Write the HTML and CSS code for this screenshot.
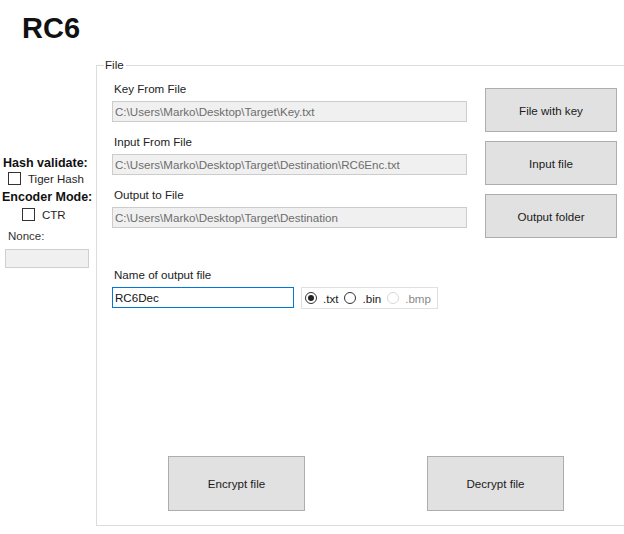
FILE: index.html
```html
<!DOCTYPE html>
<html>
<head>
<meta charset="utf-8">
<link rel="stylesheet" href="styles.css">
</head>
<body>
<h1 class="title">RC6</h1>
<div class="main">
  <div class="side">
    <div class="side-head">Hash validate:</div>
    <label class="check check-tiger"><span class="box"></span>Tiger Hash</label>
    <div class="side-head side-head-2">Encoder Mode:</div>
    <label class="check check-ctr"><span class="box"></span>CTR</label>
    <div class="nonce-label">Nonce:</div>
    <div class="nonce-box"></div>
  </div>
  <div class="group">
    <div class="legend">File</div>
    <div class="rows">
      <div class="row">
        <div class="field">
          <div class="label">Key From File</div>
          <div class="textbox">C:\Users\Marko\Desktop\Target\Key.txt</div>
        </div>
        <div class="btn btn-side">File with key</div>
      </div>
      <div class="row">
        <div class="field">
          <div class="label">Input From File</div>
          <div class="textbox">C:\Users\Marko\Desktop\Target\Destination\RC6Enc.txt</div>
        </div>
        <div class="btn btn-side">Input file</div>
      </div>
      <div class="row">
        <div class="field">
          <div class="label">Output to File</div>
          <div class="textbox">C:\Users\Marko\Desktop\Target\Destination</div>
        </div>
        <div class="btn btn-side">Output folder</div>
      </div>
    </div>
    <div class="name-block">
      <div class="label">Name of output file</div>
      <div class="name-row">
        <div class="name-input">RC6Dec</div>
        <div class="radios">
          <span class="radio on"></span><span class="rlabel">.txt</span>
          <span class="radio"></span><span class="rlabel">.bin</span>
          <span class="radio off"></span><span class="rlabel rlabel-off">.bmp</span>
        </div>
      </div>
    </div>
    <div class="actions">
      <div class="btn btn-big">Encrypt file</div>
      <div class="btn btn-big">Decrypt file</div>
    </div>
  </div>
</div>
</body>
</html>
```

FILE: styles.css
```css
html, body {
  margin: 0;
  padding: 0;
  background: #ffffff;
  overflow: hidden;
  width: 624px;
  height: 534px;
}
body {
  font-family: "Liberation Sans", Arial, sans-serif;
  font-size: 11.6px;
  color: #1e1e1e;
}
.title {
  margin: 0;
  padding: 12px 0 0 22px;
  height: 65px;
  box-sizing: border-box;
  font-size: 29px;
  line-height: 32px;
  font-weight: bold;
  color: #111;
}
.main {
  display: flex;
  align-items: flex-start;
}
.side {
  width: 96px;
  flex: none;
  padding-top: 91px;
  box-sizing: border-box;
}
.side-head {
  font-weight: bold;
  font-size: 12.5px;
  line-height: 14px;
  padding-left: 3px;
  color: #111;
}
.side-head-2 {
  margin-top: 4px;
  padding-left: 2px;
}
.check {
  display: flex;
  align-items: center;
  height: 15px;
  margin-top: 1px;
  font-size: 11.5px;
}
.check-tiger { padding-left: 8px; }
.check-ctr { padding-left: 22px; margin-top: 3px; }
.box {
  width: 11px;
  height: 11px;
  border: 1px solid #333;
  background: #fff;
  margin-right: 7px;
  flex: none;
}
.nonce-label {
  margin-top: 7px;
  padding-left: 8px;
  line-height: 14px;
  font-size: 11.5px;
  color: #333;
}
.nonce-box {
  margin: 6px 0 0 5px;
  width: 84px;
  height: 19px;
  box-sizing: border-box;
  border: 1px solid #cfcfcf;
  background: #f0f0f0;
}
.group {
  flex: none;
  width: 540px;
  height: 461px;
  box-sizing: border-box;
  border: 1px solid #dcdcdc;
  padding: 0 0 14px 15px;
  display: flex;
  flex-direction: column;
}
.legend {
  align-self: flex-start;
  margin: -8px 0 0 -8px;
  padding: 0 2px 0 1px;
  background: #fff;
  line-height: 14px;
  color: #222;
}
.rows {
  margin-top: 10px;
  display: flex;
  flex-direction: column;
  gap: 3px;
}
.row {
  display: flex;
  align-items: flex-start;
}
.field {
  width: 355px;
  flex: none;
}
.label {
  line-height: 14px;
  padding-left: 2px;
  margin-bottom: 5px;
  color: #222;
}
.textbox {
  height: 21px;
  box-sizing: border-box;
  border: 1px solid #cccccc;
  background: #f0f0f0;
  color: #6d6d6d;
  line-height: 19px;
  padding-left: 2px;
  white-space: nowrap;
  overflow: hidden;
}
.btn {
  box-sizing: border-box;
  border: 1px solid #adadad;
  background: #e1e1e1;
  display: flex;
  align-items: center;
  justify-content: center;
  color: #1a1a1a;
}
.btn-side {
  margin: 6px 0 0 18px;
  width: 132px;
  height: 44px;
}
.name-block {
  margin-top: 30px;
}
.name-row {
  display: flex;
  align-items: flex-start;
  gap: 7px;
}
.name-input {
  width: 182px;
  height: 21px;
  box-sizing: border-box;
  border: 1px solid #0078d7;
  background: #fff;
  line-height: 19px;
  padding-left: 2px;
  color: #111;
}
.radios {
  width: 137px;
  height: 22px;
  box-sizing: border-box;
  border: 1px solid #e0e0e0;
  display: flex;
  align-items: center;
  padding-left: 3px;
}
.radio {
  width: 12px;
  height: 12px;
  box-sizing: border-box;
  border: 1px solid #333;
  border-radius: 50%;
  background: #fff;
  flex: none;
  position: relative;
}
.radio.on::after {
  content: "";
  position: absolute;
  left: 2px;
  top: 2px;
  width: 6px;
  height: 6px;
  border-radius: 50%;
  background: #222;
}
.radio.off {
  border-color: #d8d8d8;
}
.rlabel {
  margin: 0 6px 0 6px;
  color: #222;
}
.rlabel-off {
  color: #8a8a8a;
  margin-right: 0;
}
.actions {
  margin-top: auto;
  display: flex;
  padding-left: 56px;
  gap: 122px;
}
.btn-big {
  width: 137px;
  height: 55px;
}
```
